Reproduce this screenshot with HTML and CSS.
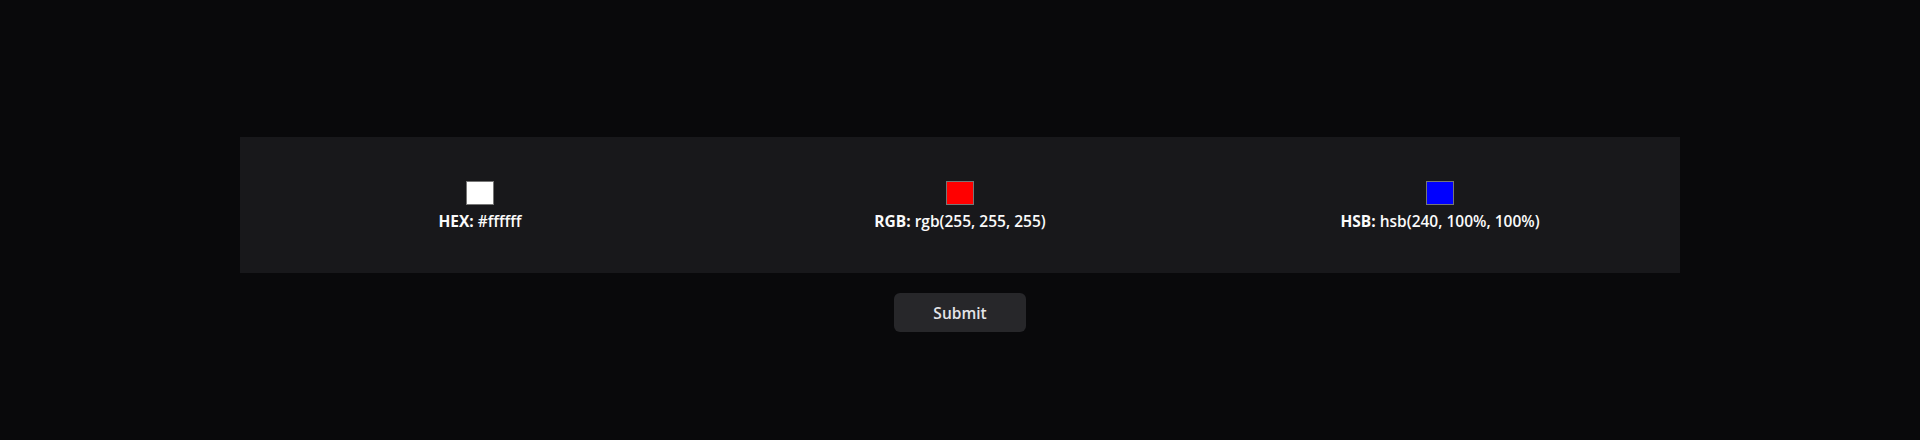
FILE: index.html
```html
<!DOCTYPE html>
<html lang="en">
<head>
<meta charset="utf-8">
<title>Color picker</title>
<link rel="stylesheet" href="styles.css">
</head>
<body>
<main class="page">
  <section class="panel">
    <div class="item">
      <div class="swatch swatch-white"></div>
      <div class="label"><strong>HEX:</strong> <span class="value">#ffffff</span></div>
    </div>
    <div class="item">
      <div class="swatch swatch-red"></div>
      <div class="label"><strong>RGB:</strong> <span class="value">rgb(255, 255, 255)</span></div>
    </div>
    <div class="item">
      <div class="swatch swatch-blue"></div>
      <div class="label"><strong>HSB:</strong> <span class="value">hsb(240, 100%, 100%)</span></div>
    </div>
  </section>
  <div class="actions">
    <button class="btn" type="button">Submit</button>
  </div>
</main>
</body>
</html>
```

FILE: styles.css
```css
html, body {
  margin: 0;
  padding: 0;
  background: #09090b;
  height: 100%;
}
body {
  font-family: "Open Sans", "Noto Sans", sans-serif;
  color: #fafafa;
}
.page {
  padding-top: 137px;
  display: flex;
  flex-direction: column;
  align-items: center;
}
.panel {
  width: 1440px;
  box-sizing: border-box;
  background: #18181b;
  padding: 44px 0 40px;
  display: grid;
  grid-template-columns: repeat(3, 1fr);
}
.item {
  display: flex;
  flex-direction: column;
  align-items: center;
  gap: 4px;
}
.swatch {
  width: 26px;
  height: 22px;
  border: 1px solid #767676;
}
.swatch-white { background: #ffffff; }
.swatch-red { background: #ff0000; }
.swatch-blue { background: #0000ff; }
.label {
  font-size: 15.5px;
  line-height: 24px;
  white-space: nowrap;
}
.label strong { font-weight: 700; }
.value { font-weight: 600; }
.actions {
  margin-top: 20px;
}
.btn {
  width: 132px;
  height: 39px;
  border: none;
  border-radius: 6px;
  background: #27272a;
  color: #e4e4e7;
  font-family: "Open Sans", "Noto Sans", sans-serif;
  font-size: 15.5px;
  font-weight: 600;
  cursor: pointer;
}
```
